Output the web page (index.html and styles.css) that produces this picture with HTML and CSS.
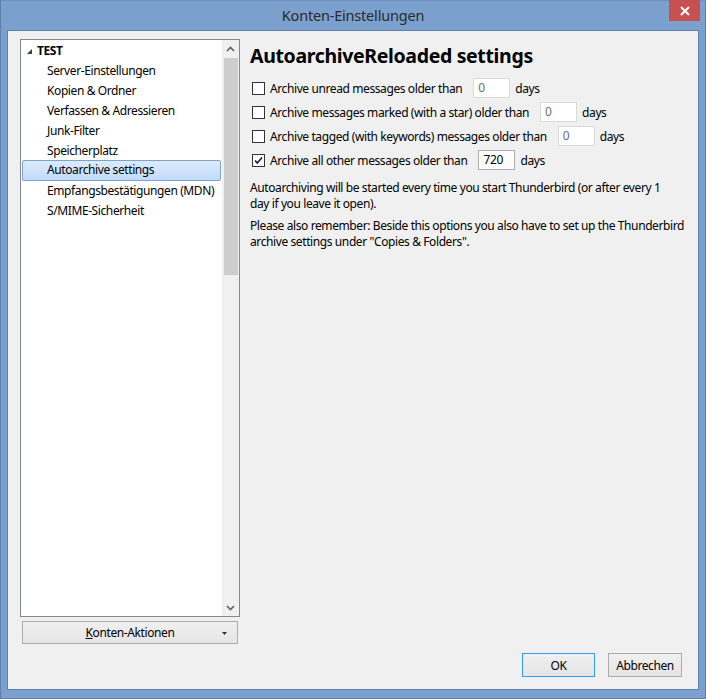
FILE: index.html
```html
<!DOCTYPE html>
<html>
<head>
<meta charset="utf-8">
<link rel="stylesheet" href="styles.css">
</head>
<body>
<div class="window">
  <div class="titlebar">
    <span class="title">Konten-Einstellungen</span>
    <div class="close"><svg width="12" height="10" viewBox="0 0 12 10"><path d="M2 1 L10 9 M10 1 L2 9" stroke="#fff" stroke-width="2"/></svg></div>
  </div>
  <div class="client">
    <div class="main">
      <div class="leftcol">
        <div class="tree">
          <div class="tree-list">
            <div class="row root"><svg class="twisty" width="6" height="6" viewBox="0 0 6 6"><polygon points="5,0 5,5 0,5" fill="#3c3c3c"/></svg><span>TEST</span></div>
            <div class="row child">Server-Einstellungen</div>
            <div class="row child">Kopien &amp; Ordner</div>
            <div class="row child">Verfassen &amp; Adressieren</div>
            <div class="row child">Junk-Filter</div>
            <div class="row child">Speicherplatz</div>
            <div class="row child selected">Autoarchive settings</div>
            <div class="row child">Empfangsbestätigungen (MDN)</div>
            <div class="row child">S/MIME-Sicherheit</div>
          </div>
          <div class="scrollbar">
            <div class="arrow"><svg width="9" height="6" viewBox="0 0 9 6"><path d="M1 5 L4.5 1.5 L8 5" stroke="#606060" stroke-width="1.6" fill="none"/></svg></div>
            <div class="track"><div class="thumb"></div></div>
            <div class="arrow"><svg width="9" height="6" viewBox="0 0 9 6"><path d="M1 1 L4.5 4.5 L8 1" stroke="#606060" stroke-width="1.6" fill="none"/></svg></div>
          </div>
        </div>
        <div class="btn menu-btn"><span><u>K</u>onten-Aktionen</span><svg class="drop" width="5" height="3" viewBox="0 0 5 3"><polygon points="0,0 5,0 2.5,3" fill="#333"/></svg></div>
      </div>
      <div class="panel">
        <h1>AutoarchiveReloaded settings</h1>
        <div class="opt"><span class="cb"></span><span class="lbl">Archive unread messages older than</span><span class="field dis">0</span><span class="unit">days</span></div>
        <div class="opt"><span class="cb"></span><span class="lbl">Archive messages marked (with a star) older than</span><span class="field dis">0</span><span class="unit">days</span></div>
        <div class="opt"><span class="cb"></span><span class="lbl">Archive tagged (with keywords) messages older than</span><span class="field dis">0</span><span class="unit">days</span></div>
        <div class="opt"><span class="cb on"><svg width="11" height="11" viewBox="0 0 11 11"><path d="M2 5.5 L4.3 8 L9 2.5" stroke="#222" stroke-width="1.7" fill="none"/></svg></span><span class="lbl">Archive all other messages older than</span><span class="field">720</span><span class="unit">days</span></div>
        <p class="note">Autoarchiving will be started every time you start Thunderbird (or after every 1<br>day if you leave it open).</p>
        <p class="note">Please also remember: Beside this options you also have to set up the Thunderbird archive settings under "Copies &amp; Folders".</p>
      </div>
    </div>
    <div class="footer">
      <div class="btn ok">OK</div>
      <div class="btn cancel">Abbrechen</div>
    </div>
  </div>
</div>
</body>
</html>
```
FILE: styles.css
```css
html, body {
  margin: 0;
  padding: 0;
}
body {
  font-family: "Noto Sans", "Open Sans", sans-serif;
  font-size: 12px;
  letter-spacing: -0.4px;
  color: #000;
}
.window {
  width: 706px;
  height: 699px;
  box-sizing: border-box;
  background: #7ba0cd;
  border: 1px solid #5d7fb0;
  border-top-color: #6b8fc2;
  padding: 0 6px 8px 6px;
  display: flex;
  flex-direction: column;
}
.titlebar {
  height: 29px;
  display: flex;
  align-items: center;
  justify-content: center;
  position: relative;
}
.title {
  font-size: 14.5px;
  letter-spacing: -0.2px;
  color: #2a2a2a;
  margin-top: -1px;
}
.close {
  position: absolute;
  right: -1px;
  top: -1px;
  width: 31px;
  height: 21px;
  background: #c75050;
  display: flex;
  align-items: center;
  justify-content: center;
}
.client {
  flex: 1;
  background: #f0f0f0;
  border: 1px solid #5f81b0;
  display: flex;
  flex-direction: column;
}
.main {
  display: flex;
  padding: 8px 0 0 12px;
}
.leftcol {
  width: 220px;
  display: flex;
  flex-direction: column;
  gap: 4px;
}
.tree {
  height: 578px;
  box-sizing: border-box;
  border: 1px solid #828790;
  background: #fff;
  display: flex;
}
.tree-list {
  flex: 1;
  padding: 1px 0 0 1px;
}
.row {
  height: 20px;
  line-height: 20px;
  box-sizing: border-box;
  white-space: nowrap;
}
.root {
  display: flex;
  align-items: center;
  font-weight: bold;
  padding-left: 5px;
}
.twisty {
  margin-right: 4px;
  margin-top: 1px;
}
.child {
  padding-left: 25px;
}
.selected {
  border: 1px solid #7da2ce;
  border-radius: 2px;
  background: linear-gradient(#dcebfc, #c1dbfc);
  line-height: 18px;
  margin-right: 1px;
  margin-top: -1px;
  padding-left: 24px;
  height: 21px;
}
.scrollbar {
  width: 17px;
  display: flex;
  flex-direction: column;
  background: #f0f0f0;
}
.arrow {
  height: 17px;
  display: flex;
  align-items: center;
  justify-content: center;
}
.track {
  flex: 1;
  padding: 1px 1px 0 2px;
}
.thumb {
  height: 217px;
  background: #cdcdcd;
}
.btn {
  box-sizing: border-box;
  border: 1px solid #acacac;
  background: linear-gradient(#f0f0f0, #e5e5e5);
  display: flex;
  align-items: center;
  justify-content: center;
  color: #000;
}
.menu-btn {
  margin-left: 2px;
  width: 216px;
  height: 23px;
  position: relative;
}
.drop {
  position: absolute;
  right: 10px;
  top: 10px;
}
.panel {
  margin-left: 10px;
  flex: 1;
  padding-right: 12px;
}
h1 {
  font-size: 19.5px;
  font-weight: bold;
  margin: 5px 0 8px 0;
  line-height: 24px;
  letter-spacing: -0.35px;
}
.opt {
  display: flex;
  align-items: center;
  height: 24px;
  white-space: nowrap;
}
.cb {
  width: 13px;
  height: 13px;
  box-sizing: border-box;
  border: 1px solid #333;
  background: #fff;
  margin: 0 5px 0 2px;
  display: flex;
  align-items: center;
  justify-content: center;
}
.lbl {
  margin-right: 11px;
}
.field {
  width: 37px;
  height: 20px;
  box-sizing: border-box;
  border: 1px solid #abadb3;
  background: #fff;
  padding-left: 4px;
  line-height: 18px;
  margin-right: 5px;
}
.field.dis {
  border-color: #d9d9d9;
  color: #6d6d6d;
}
.note {
  margin: 8px 0 0 0;
  line-height: 16px;
}
.note + .note {
  margin-top: 6px;
}
.footer {
  display: flex;
  justify-content: flex-end;
  gap: 13px;
  padding: 9px 16px 0 0;
}
.footer .btn {
  height: 24px;
}
.ok {
  width: 73px;
  border-color: #3399ff;
}
.cancel {
  width: 74px;
}
```
